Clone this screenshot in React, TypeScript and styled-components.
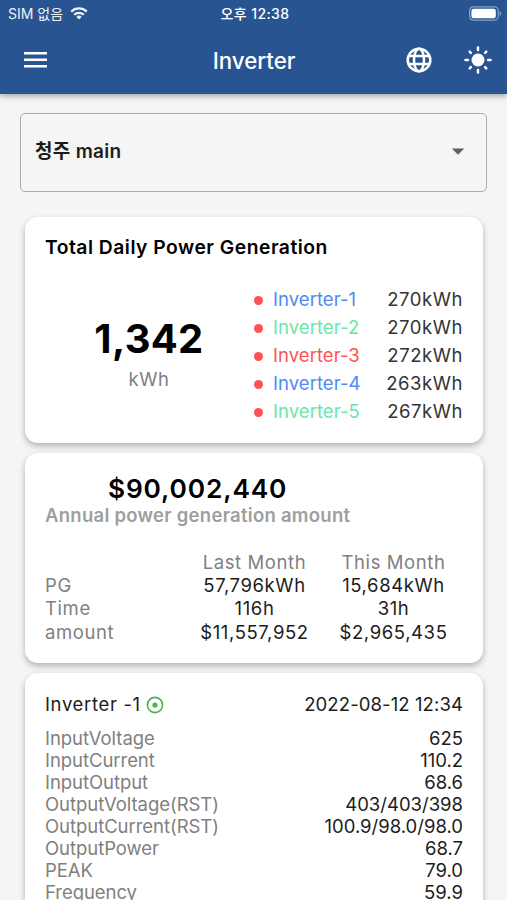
import React from "react";
import styled, { createGlobalStyle } from "styled-components";
import { MdArrowDropDown } from "react-icons/md";

const COLORS = {
  primary: "#295492",
  background: "#f5f5f5",
  grey: "#808080",
  lightGrey: "#9e9e9e",
  blue: "#4c8bf5",
  mint: "#69e6a6",
  red: "#ff5252",
  green: "#4caf50",
};

const inverters = [
  { name: "Inverter-1", value: "270kWh", color: COLORS.blue },
  { name: "Inverter-2", value: "270kWh", color: COLORS.mint },
  { name: "Inverter-3", value: "272kWh", color: COLORS.red },
  { name: "Inverter-4", value: "263kWh", color: COLORS.blue },
  { name: "Inverter-5", value: "267kWh", color: COLORS.mint },
];

const readings = [
  ["InputVoltage", "625"],
  ["InputCurrent", "110.2"],
  ["InputOutput", "68.6"],
  ["OutputVoltage(RST)", "403/403/398"],
  ["OutputCurrent(RST)", "100.9/98.0/98.0"],
  ["OutputPower", "68.7"],
  ["PEAK", "79.0"],
  ["Frequency", "59.9"],
];

const App: React.FC = () => {
  return (
    <Screen>
      <GlobalStyle />
      <TopBar>
        <StatusBar>
          <Carrier>
            SIM 없음
            <WifiIcon />
          </Carrier>
          <Clock>오후 12:38</Clock>
          <BatteryIcon />
        </StatusBar>
        <Toolbar>
          <MenuIcon />
          <PageTitle>Inverter</PageTitle>
          <Actions>
            <GlobeIcon />
            <SunIcon />
          </Actions>
        </Toolbar>
      </TopBar>
      <Content>
        <PlantSelect>
          <PlantName>청주 main</PlantName>
          <MdArrowDropDown size={30} color="#616161" />
        </PlantSelect>

        <DailyCard>
          <CardTitle>Total Daily Power Generation</CardTitle>
          <DailyBody>
            <Total>
              <TotalValue>1,342</TotalValue>
              <TotalUnit>kWh</TotalUnit>
            </Total>
            <InverterList>
              {inverters.map((item) => (
                <InverterRow key={item.name}>
                  <Dot />
                  <InverterName $color={item.color}>{item.name}</InverterName>
                  <InverterValue>{item.value}</InverterValue>
                </InverterRow>
              ))}
            </InverterList>
          </DailyBody>
        </DailyCard>

        <AmountCard>
          <AmountHeader>
            <Amount>$90,002,440</Amount>
            <AmountLabel>Annual power generation amount</AmountLabel>
          </AmountHeader>
          <MonthTable>
            <LabelColumn>
              <span>PG</span>
              <span>Time</span>
              <span>amount</span>
            </LabelColumn>
            <MonthColumn>
              <MonthName>Last Month</MonthName>
              <span>57,796kWh</span>
              <span>116h</span>
              <span>$11,557,952</span>
            </MonthColumn>
            <MonthColumn>
              <MonthName>This Month</MonthName>
              <span>15,684kWh</span>
              <span>31h</span>
              <span>$2,965,435</span>
            </MonthColumn>
          </MonthTable>
        </AmountCard>

        <DetailCard>
          <DetailHeader>
            <DetailName>
              Inverter -1
              <StatusIcon />
            </DetailName>
            <Timestamp>2022-08-12 12:34</Timestamp>
          </DetailHeader>
          {readings.map(([label, value]) => (
            <Reading key={label}>
              <Label>{label}</Label>
              <Value>{value}</Value>
            </Reading>
          ))}
        </DetailCard>
      </Content>
    </Screen>
  );
};

export default App;

const WifiIcon: React.FC = () => (
  <svg width="18" height="13" viewBox="0 0 18 13" fill="none" stroke="#fff">
    <path d="M1.2 4.6a11.2 11.2 0 0 1 15.6 0" strokeWidth="2.3" />
    <path d="M4.2 7.8a6.9 6.9 0 0 1 9.6 0" strokeWidth="2.2" />
    <path d="M9 12.4 6.4 9.9a3.7 3.7 0 0 1 5.2 0Z" fill="#fff" stroke="none" />
  </svg>
);

const BatteryIcon: React.FC = () => (
  <svg width="33" height="15" viewBox="0 0 33 15">
    <rect
      x="0.6"
      y="0.9"
      width="28.6"
      height="13.2"
      rx="3.8"
      fill="none"
      stroke="#fff"
      strokeOpacity="0.45"
      strokeWidth="1.2"
    />
    <rect x="2.4" y="2.7" width="24.4" height="9.6" rx="2.2" fill="#fff" />
    <path d="M30.6 5.2c1.9.7 1.9 3.9 0 4.6Z" fill="#fff" fillOpacity="0.5" />
  </svg>
);

const MenuIcon: React.FC = () => (
  <svg width="23" height="16" viewBox="0 0 23 16" fill="#fff">
    <path d="M0 0h23v2.6H0zM0 6.4h23V9H0zM0 12.9h23v2.6H0z" />
  </svg>
);

const GlobeIcon: React.FC = () => (
  <svg
    width="30"
    height="30"
    viewBox="-15 -15 30 30"
    fill="none"
    stroke="#fff"
    strokeWidth="2.5"
  >
    <circle r="11.3" />
    <ellipse rx="5" ry="11.3" />
    <path d="M-10.6 -4.1H10.6M-10.6 4.1H10.6" />
  </svg>
);

const SunIcon: React.FC = () => (
  <svg width="28" height="28" viewBox="-14 -14 28 28">
    <circle r="6.5" fill="#fff" />
    {[0, 45, 90, 135, 180, 225, 270, 315].map((angle) => (
      <path
        key={angle}
        d={angle % 90 ? "M0 -10.1V-11.7" : "M0 -10.1V-12.5"}
        stroke="#fff"
        strokeWidth="2.5"
        strokeLinecap="round"
        transform={`rotate(${angle})`}
      />
    ))}
  </svg>
);

const StatusIcon: React.FC = () => (
  <svg width="18" height="18" viewBox="0 0 18 18">
    <circle
      cx="9"
      cy="9"
      r="7.6"
      fill="none"
      stroke={COLORS.green}
      strokeWidth="1.6"
    />
    <circle cx="9" cy="9" r="2.6" fill={COLORS.green} />
  </svg>
);

const GlobalStyle = createGlobalStyle`
  body {
    margin: 0;
    background: ${COLORS.background};
    font-family: Inter, "Noto Sans CJK KR", sans-serif;
    color: #1c1c1c;
  }
`;

const Screen = styled.div`
  height: 900px;
  overflow: hidden;
`;

const TopBar = styled.header`
  height: 94px;
  background: ${COLORS.primary};
  color: #fff;
  box-shadow: 0 2px 6px rgba(0, 0, 0, 0.35);
`;

const StatusBar = styled.div`
  display: grid;
  grid-template-columns: 1fr auto 1fr;
  align-items: center;
  height: 27px;
  padding: 0 5px 0 8px;
  font-size: 14px;
  line-height: 27px;

  > svg {
    justify-self: end;
  }
`;

const Carrier = styled.div`
  display: flex;
  align-items: center;
  gap: 7px;
  opacity: 0.92;
`;

const Clock = styled.div`
  font-weight: 500;
  letter-spacing: 0.4px;
`;

const Toolbar = styled.div`
  display: grid;
  grid-template-columns: 1fr auto 1fr;
  align-items: center;
  height: 66px;
  padding: 0 15px 0 16px;

  > svg {
    margin-left: 8px;
  }
`;

const PageTitle = styled.h1`
  margin: 0;
  font-size: 22.3px;
  font-weight: 500;
`;

const Actions = styled.div`
  display: flex;
  align-items: center;
  justify-content: flex-end;
  gap: 30px;
`;

const Content = styled.main`
  padding: 19px 20px 0;
`;

const PlantSelect = styled.div`
  display: flex;
  align-items: center;
  justify-content: space-between;
  box-sizing: border-box;
  height: 79px;
  margin-bottom: 25px;
  padding: 0 13px 3px 14px;
  border: 1.5px solid #adadad;
  border-radius: 5px;
`;

const PlantName = styled.span`
  padding-bottom: 4px;
  font-size: 19px;
  font-weight: 600;
  letter-spacing: 0.3px;
`;

const Card = styled.section`
  box-sizing: border-box;
  margin: 0 4px 10px 5px;
  padding: 0 20px;
  background: #fff;
  border-radius: 13px;
  box-shadow: 0 3px 6px rgba(0, 0, 0, 0.28);
`;

const DailyCard = styled(Card)`
  height: 226px;
  padding-top: 18px;
`;

const CardTitle = styled.h2`
  margin: 0;
  font-size: 19.3px;
  font-weight: 600;
  line-height: 24px;
  letter-spacing: 0.5px;
  color: #000;
`;

const DailyBody = styled.div`
  display: flex;
  justify-content: space-between;
  margin-top: 26px;
`;

const Total = styled.div`
  display: flex;
  flex-direction: column;
  align-items: center;
  width: 208px;
  padding-top: 29px;
`;

const TotalValue = styled.div`
  font-size: 40px;
  font-weight: 700;
  line-height: 50px;
  letter-spacing: 0.3px;
  color: #000;
`;

const TotalUnit = styled.div`
  font-size: 18.5px;
  line-height: 31px;
  letter-spacing: 0.5px;
  color: ${COLORS.grey};
`;

const InverterList = styled.div`
  width: 209px;
`;

const InverterRow = styled.div`
  display: flex;
  align-items: center;
  font-size: 18.5px;
  line-height: 28.1px;
`;

const Dot = styled.span`
  width: 9px;
  height: 9px;
  margin: 2px 10px 0 0;
  border-radius: 50%;
  background: ${COLORS.red};
`;

const InverterName = styled.span<{ $color: string }>`
  flex: 1;
  letter-spacing: 0.05px;
  color: ${({ $color }) => $color};
`;

const InverterValue = styled.span`
  letter-spacing: 0.55px;
  color: #333;
`;

const AmountCard = styled(Card)`
  height: 210px;
  padding-top: 20px;
`;

const AmountHeader = styled.div`
  display: flex;
  flex-direction: column;
  align-items: center;
  width: fit-content;
`;

const Amount = styled.div`
  font-size: 26.3px;
  font-weight: 600;
  line-height: 31px;
  letter-spacing: 0.85px;
  color: #000;
`;

const AmountLabel = styled.div`
  font-size: 18.5px;
  font-weight: 600;
  line-height: 22px;
  letter-spacing: 0.27px;
  color: ${COLORS.lightGrey};
`;

const MonthTable = styled.div`
  display: grid;
  grid-template-columns: 140px 139px 139px;
  align-items: end;
  margin-top: 25px;
  font-size: 18.5px;
  line-height: 23.2px;
  letter-spacing: 0.6px;
`;

const LabelColumn = styled.div`
  display: flex;
  flex-direction: column;
  color: ${COLORS.grey};
`;

const MonthColumn = styled.div`
  display: flex;
  flex-direction: column;
  align-items: center;
`;

const MonthName = styled.span`
  color: ${COLORS.grey};
`;

const DetailCard = styled(Card)`
  height: 300px;
  padding-top: 20px;
  font-size: 18.5px;
`;

const DetailHeader = styled.div`
  display: flex;
  justify-content: space-between;
  margin-bottom: 11px;
  line-height: 23px;
`;

const DetailName = styled.div`
  display: flex;
  align-items: center;
  gap: 5px;
  letter-spacing: 0.65px;
`;

const Timestamp = styled.span`
  letter-spacing: 0.1px;
`;

const Reading = styled.div`
  display: flex;
  justify-content: space-between;
  line-height: 22px;
`;

const Label = styled.span`
  letter-spacing: -0.05px;
  color: ${COLORS.grey};
`;

const Value = styled.span`
  color: #1c1c1c;
`;
